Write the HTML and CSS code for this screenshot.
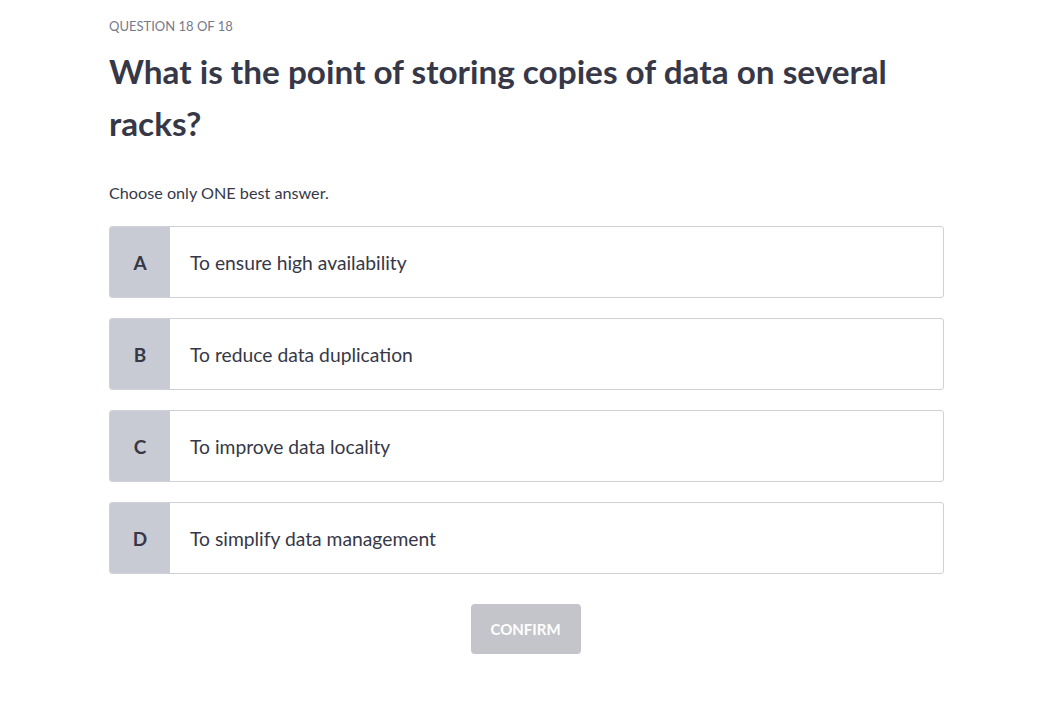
FILE: index.html
```html
<!DOCTYPE html>
<html>
<head>
<meta charset="utf-8">
<link rel="stylesheet" href="styles.css">
</head>
<body>
<main class="quiz">
  <div class="counter">QUESTION 18 OF 18</div>
  <h1 class="question">What is the point of storing copies of data on several racks?</h1>
  <p class="hint">Choose only ONE best answer.</p>
  <ul class="options">
    <li class="option"><span class="letter">A</span><span class="text">To ensure high availability</span></li>
    <li class="option"><span class="letter">B</span><span class="text">To reduce data duplication</span></li>
    <li class="option"><span class="letter">C</span><span class="text">To improve data locality</span></li>
    <li class="option"><span class="letter">D</span><span class="text">To simplify data management</span></li>
  </ul>
  <div class="actions"><button class="confirm" disabled>CONFIRM</button></div>
</main>
</body>
</html>
```
FILE: styles.css
```css
* { box-sizing: border-box; }
body {
  margin: 0;
  background: #fff;
  font-family: Lato, "Noto Sans", sans-serif;
  color: #363848;
}
.quiz {
  width: 835px;
  margin-left: 109px;
  padding-top: 16px;
}
.counter {
  font-size: 13px;
  line-height: 20px;
  color: #777a89;
}
.question {
  margin: 9px 0 0;
  font-size: 33.3px;
  line-height: 52px;
  font-weight: 700;
  color: #363848;
  width: 800px;
}
.hint {
  margin: 33px 0 0;
  font-size: 16.2px;
  line-height: 22px;
}
.options {
  list-style: none;
  margin: 22px 0 0;
  padding: 0;
  display: flex;
  flex-direction: column;
  gap: 20px;
}
.option {
  display: flex;
  height: 72px;
  border: 1px solid #cfd0d8;
  border-radius: 3px;
  overflow: hidden;
  background: #fff;
}
.letter {
  width: 60px;
  flex: none;
  background: #c9cbd4;
  display: flex;
  align-items: center;
  justify-content: center;
  font-size: 19px;
  font-weight: 700;
  color: #363848;
}
.text {
  display: flex;
  align-items: center;
  padding-left: 20px;
  font-size: 19.3px;
}
.actions {
  display: flex;
  justify-content: center;
  margin-top: 30px;
}
.confirm {
  width: 110px;
  height: 50px;
  border: none;
  border-radius: 4px;
  background: #c4c5ca;
  color: #fff;
  font-family: inherit;
  font-size: 15px;
  font-weight: 700;
  margin-right: 2px;
}
```
